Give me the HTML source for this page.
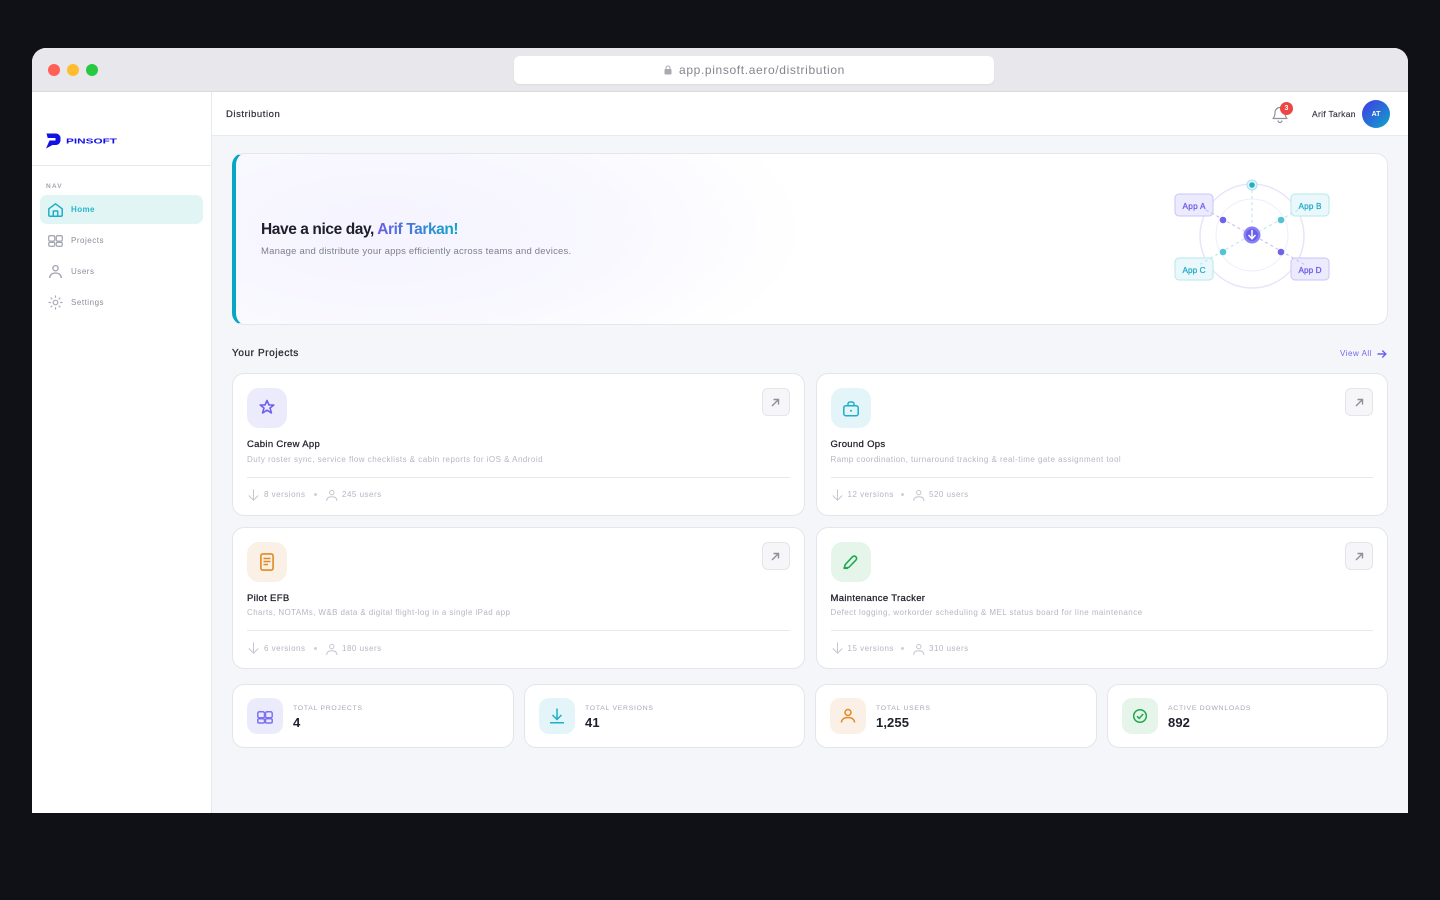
<!DOCTYPE html>
<html lang="en">
<head>
<meta charset="utf-8">
<title>Pinsoft Distribution</title>
<style>
*{box-sizing:border-box;margin:0;padding:0}
html,body{width:1440px;height:900px;overflow:hidden;background:#0f1117;font-family:"Liberation Sans",sans-serif}
.a{position:absolute}
.t{position:absolute;white-space:nowrap;line-height:1}
svg{position:absolute;overflow:visible;fill:none}
.win{position:absolute;left:32px;top:48px;width:1376px;height:765px;background:#f5f6fa;border-radius:14px 14px 0 0;overflow:hidden}
.root{position:absolute;left:0;top:0;width:1440px;height:900px}
.card{position:absolute;background:#fff;border:1px solid #e4e5ea;border-radius:12px}
.ic{position:absolute;width:40px;height:40px;border-radius:12px}
.btn{position:absolute;width:28px;height:28px;background:#f6f6f8;border:1px solid #e4e5ea;border-radius:6px}
.div{position:absolute;height:1px;background:#e8e9ed}
.ct{font-size:9.5px;color:#20212c;font-weight:400;letter-spacing:.32px;-webkit-text-stroke:.25px #20212c}
.cd{font-size:8px;color:#b5b7c3;letter-spacing:.467px}
.cf{font-size:8px;color:#b5b7c3;letter-spacing:.5px}
.dot{position:absolute;width:3px;height:3px;border-radius:50%;background:#cfd1d9}
.nav{font-size:8px;color:#8b8d9c;letter-spacing:.52px}
.sl{font-size:6.8px;color:#a6a8b5;letter-spacing:.76px}
.sv{font-size:13px;color:#1e1f2b;font-weight:700;letter-spacing:.1px}
</style>
</head>
<body>
<div class="win"></div>
<div class="root">
  <!-- Title bar -->
  <div class="a" style="left:32px;top:48px;width:1376px;height:44px;background:#e8e8ec;border-bottom:1px solid #d9d9de;border-radius:14px 14px 0 0"></div>
  <div class="a" style="left:48px;top:64px;width:12px;height:12px;border-radius:50%;background:#ff5f57"></div>
  <div class="a" style="left:67px;top:64px;width:12px;height:12px;border-radius:50%;background:#febc2e"></div>
  <div class="a" style="left:86px;top:64px;width:12px;height:12px;border-radius:50%;background:#28c840"></div>
  <div class="a" style="left:514px;top:56px;width:480px;height:28px;background:#fff;border-radius:6px;box-shadow:0 1px 2px rgba(0,0,0,.06)"></div>
  <svg style="left:664px;top:65px" width="8" height="10" viewBox="0 0 8 10"><rect x=".5" y="4" width="7" height="5.500" rx="1" fill="#a9a9b0"/><path d="M2 4.500V3a2 2 0 0 1 4 0v1.500" stroke="#a9a9b0" stroke-width="1"/></svg>
  <div class="t" style="left:679px;top:64px;font-size:12px;color:#85858e;letter-spacing:.64px">app.pinsoft.aero/distribution</div>

  <!-- Sidebar -->
  <div class="a" style="left:32px;top:92px;width:180px;height:721px;background:#fff;border-right:1px solid #e8e9ed"></div>
  <div class="a" style="left:32px;top:165px;width:179px;height:1px;background:#e8e9ed"></div>
  <svg style="left:46px;top:133px" width="15" height="16" viewBox="0 0 15 16"><path d="M.5.500H10a4.500 4.500 0 0 1 4.500 4.500v2.500a4.500 4.500 0 0 1-4.500 4.500H6.500L0 15.500 3.500 7.500H9.500V5H1.700z" fill="#1111e6"/></svg>
  <svg style="left:66px;top:136px" width="52" height="10" viewBox="0 0 52 10"><text x="0" y="7.300" font-family="Liberation Sans" font-size="7.400" font-weight="700" fill="#1111e6" textLength="51" lengthAdjust="spacingAndGlyphs">PINSOFT</text></svg>
  <div class="t" style="left:46px;top:183.500px;font-size:6.500px;color:#a2a4b1;letter-spacing:1.150px;font-weight:700">NAV</div>
  <div class="a" style="left:40px;top:195px;width:163px;height:29px;background:#e0f5f4;border-radius:7px"></div>
  <svg style="left:48px;top:203px" width="15" height="14" viewBox="0 0 15 14" stroke="#1eaec9" stroke-width="1.500" stroke-linejoin="round"><path d="M.8 5.800 7.500.8l6.700 5V12a1.300 1.300 0 0 1-1.300 1.300H2.100A1.300 1.300 0 0 1 .8 12z"/><path d="M5.300 13.300V8h4.400v5.300"/></svg>
  <div class="t nav" style="left:71px;top:205.500px;color:#25b7cd;font-weight:700;letter-spacing:.42px">Home</div>
  <svg style="left:48px;top:235px" width="15" height="12" viewBox="0 0 15 12" stroke="#a7a9b6" stroke-width="1.300"><rect x=".7" y=".7" width="6" height="5.500" rx="1.400"/><rect x="8.300" y=".7" width="6" height="5.500" rx="1.400"/><rect x=".7" y="7.300" width="6" height="4" rx="1.400"/><rect x="8.300" y="7.300" width="6" height="4" rx="1.400"/></svg>
  <div class="t nav" style="left:71px;top:236.500px">Projects</div>
  <svg style="left:49px;top:265px" width="13" height="13" viewBox="0 0 13 13" stroke="#a0a2b0" stroke-width="1.300"><circle cx="6.500" cy="3.200" r="2.600"/><path d="M.7 13c0-3 2.300-5 5.800-5s5.800 2 5.800 5"/></svg>
  <div class="t nav" style="left:71px;top:267.500px">Users</div>
  <svg style="left:48px;top:295px" width="15" height="15" viewBox="0 0 15 15" stroke="#a7a9b6" stroke-width="1.200" stroke-linecap="round"><circle cx="7.500" cy="7.500" r="2.300"/><path d="M7.500 1v1.300M7.500 12.700V14M1 7.500h1.300M12.700 7.500H14M3 3l.9.900M11.100 11.100l.9.900M3 12l.9-.900M11.100 3.900 12 3"/></svg>
  <div class="t nav" style="left:71px;top:298.500px">Settings</div>

  <!-- Header -->
  <div class="a" style="left:212px;top:92px;width:1196px;height:44px;background:#fff;border-bottom:1px solid #e9eaef"></div>
  <div class="t" style="left:226px;top:109.500px;font-size:9.500px;color:#2a2b36;letter-spacing:.57px;-webkit-text-stroke:.2px #2a2b36">Distribution</div>
  <svg style="left:1272px;top:105px" width="16" height="18" viewBox="0 0 16 18" stroke="#8f919e" stroke-width="1.200" stroke-linejoin="round"><path d="M1 13.500c1.500-1.500 2-3 2-6a5 5 0 0 1 10 0c0 3 .5 4.500 2 6z"/><path d="M6 15.500a2 2 0 0 0 4 0"/></svg>
  <div class="a" style="left:1280px;top:102px;width:13px;height:13px;border-radius:50%;background:#ef4444"></div>
  <div class="t" style="left:1280px;top:105px;width:13px;text-align:center;font-size:7px;color:#fff;font-weight:700">3</div>
  <div class="t" style="left:1312px;top:110px;font-size:8.500px;color:#30313c;letter-spacing:.3px;-webkit-text-stroke:.15px #30313c">Arif Tarkan</div>
  <div class="a" style="left:1362px;top:100px;width:28px;height:28px;border-radius:50%;background:linear-gradient(135deg,#4338e6,#0ea5c9)"></div>
  <div class="t" style="left:1362px;top:110.500px;width:28px;text-align:center;font-size:7px;color:#fff;font-weight:700">AT</div>

  <!-- Hero -->
  <div class="a" style="left:232px;top:153px;width:1156px;height:172px;border:1px solid #e6e7ec;border-left:4px solid #06a6c4;border-radius:12px;background:radial-gradient(ellipse 420px 170px at 150px 75px,#f5f4ff 0%,#f9f8ff 55%,rgba(255,255,255,0) 100%),#fff"></div>
  <div class="t" style="left:261px;top:222px;font-size:15.500px;font-weight:700;color:#1e1f2b;letter-spacing:-.41px">Have a nice day, <span style="background:linear-gradient(90deg,#6c5ce7,#0ea5c9);-webkit-background-clip:text;background-clip:text;color:transparent">Arif Tarkan!</span></div>
  <div class="t" style="left:261px;top:246.500px;font-size:9.500px;color:#7d7f8e;letter-spacing:.215px">Manage and distribute your apps efficiently across teams and devices.</div>
  <svg style="left:1150px;top:165px" width="200" height="140" viewBox="1150 165 200 140">
    <circle cx="1252" cy="236" r="52" stroke="#e7e5fb" stroke-width="1.500"/>
    <circle cx="1252" cy="235" r="36" stroke="#eeedfb" stroke-width="1"/>
    <path d="M1252 190V227" stroke="#bfe8ef" stroke-width="1.200" stroke-dasharray="3 3"/>
    <rect x="1175" y="194" width="38" height="22" rx="4" fill="#eceafd" stroke="#c9c4f7" stroke-width="1"/>
    <rect x="1291" y="194" width="38" height="22" rx="4" fill="#eaf8fb" stroke="#b5e8ee" stroke-width="1"/>
    <rect x="1175" y="258" width="38" height="22" rx="4" fill="#eaf8fb" stroke="#b5e8ee" stroke-width="1"/>
    <rect x="1291" y="258" width="38" height="22" rx="4" fill="#eceafd" stroke="#c9c4f7" stroke-width="1"/>
    <text x="1182.500" y="209" font-family="Liberation Sans" font-size="8.200" fill="#6c5ce7" stroke="#6c5ce7" stroke-width=".3" textLength="23" lengthAdjust="spacing">App A</text>
    <text x="1298.500" y="209" font-family="Liberation Sans" font-size="8.200" fill="#22aec9" stroke="#22aec9" stroke-width=".3" textLength="23" lengthAdjust="spacing">App B</text>
    <text x="1182.500" y="273" font-family="Liberation Sans" font-size="8.200" fill="#22aec9" stroke="#22aec9" stroke-width=".3" textLength="23" lengthAdjust="spacing">App C</text>
    <text x="1298.500" y="273" font-family="Liberation Sans" font-size="8.200" fill="#6c5ce7" stroke="#6c5ce7" stroke-width=".3" textLength="23" lengthAdjust="spacing">App D</text>
    <path d="M1206 210 1244 231M1260 239 1307 266" stroke="#c9c4f7" stroke-width="1.200" stroke-dasharray="3 3"/>
    <path d="M1298 210 1260 231M1244 239 1197 266" stroke="#bfe8ef" stroke-width="1.200" stroke-dasharray="3 3"/>
    <circle cx="1252" cy="185" r="5" fill="#e4f6f9" stroke="#a9e2ea" stroke-width="1"/>
    <circle cx="1252" cy="185" r="2.800" fill="#22aec9"/>
    <circle cx="1223" cy="220" r="3.300" fill="#6f62ee"/>
    <circle cx="1281" cy="220" r="3.300" fill="#55c3d6"/>
    <circle cx="1223" cy="252" r="3.300" fill="#55c3d6"/>
    <circle cx="1281" cy="252" r="3.300" fill="#6f62ee"/>
    <circle cx="1252" cy="235" r="8.500" fill="#8a80f5"/>
    <circle cx="1252" cy="235" r="6" fill="#6a5ded"/>
    <path d="M1252 230V238.500M1248.500 235 1252 238.800 1255.500 235" stroke="#fff" stroke-width="1.500"/>
  </svg>

  <!-- Section heading -->
  <div class="t" style="left:232px;top:349px;font-size:10px;color:#2a2b36;letter-spacing:.6px;-webkit-text-stroke:.3px #2a2b36">Your Projects</div>
  <div class="t" style="left:1340px;top:350px;font-size:8px;color:#7168f0;letter-spacing:.52px">View All</div>
  <svg style="left:1377px;top:348.500px" width="10" height="10" viewBox="0 0 10 10" stroke="#6a60ef" stroke-width="1.400"><path d="M.5 5H8.800M5.300 1.500 8.800 5 5.300 8.500"/></svg>

  <!-- Card 1 -->
  <div class="card" style="left:232px;top:373px;width:573px;height:143px"></div>
  <div class="ic" style="left:247px;top:388px;background:#ecebfc"></div>
  <svg style="left:259px;top:399px" width="16" height="16" viewBox="0 0 16 16" stroke="#6c60ee" stroke-width="1.600" stroke-linejoin="round"><path d="M8 1.500 10 6h4.800l-3.800 3 1.400 5L8 11.200 3.600 14 5 9 1.200 6H6z"/></svg>
  <div class="btn" style="left:762px;top:388px"></div>
  <svg style="left:771px;top:398px" width="9" height="9" viewBox="0 0 9 9" stroke="#8e8f9b" stroke-width="1.400"><path d="M1 8 7.500 1.500M2.500 1.500H7.500V6.500"/></svg>
  <div class="t ct" style="left:247px;top:439.500px">Cabin Crew App</div>
  <div class="t cd" style="left:247px;top:455.500px">Duty roster sync, service flow checklists &amp; cabin reports for iOS &amp; Android</div>
  <div class="div" style="left:247px;top:477px;width:543px"></div>
  <svg style="left:248px;top:488.500px" width="12" height="12" viewBox="0 0 12 12" stroke="#c4c6d0" stroke-width="1"><path d="M5.500.5V11M.8 6.500 5.500 11.200 10.200 6.500"/></svg>
  <div class="t cf" style="left:264px;top:490.500px">8 versions</div>
  <div class="dot" style="left:314px;top:493px"></div>
  <svg style="left:326px;top:490px" width="12" height="11" viewBox="0 0 12 11" stroke="#c4c6d0" stroke-width="1"><circle cx="5.800" cy="2.600" r="2.200"/><path d="M.7 11c0-2.800 2-4.200 5.100-4.200s5.100 1.400 5.100 4.200"/></svg>
  <div class="t cf" style="left:342px;top:490.500px">245 users</div>

  <!-- Card 2 -->
  <div class="card" style="left:816px;top:373px;width:572px;height:143px"></div>
  <div class="ic" style="left:831px;top:388px;background:#e4f5f9"></div>
  <svg style="left:843px;top:401px" width="16" height="15" viewBox="0 0 16 15" stroke="#1eaec9" stroke-width="1.500"><rect x=".8" y="4.700" width="14.400" height="10" rx="2"/><path d="M5 4.700V3a2 2 0 0 1 2-2h2a2 2 0 0 1 2 2v1.700"/><circle cx="8" cy="9.700" r="1" fill="#1eaec9" stroke="none"/></svg>
  <div class="btn" style="left:1345px;top:388px"></div>
  <svg style="left:1355px;top:398px" width="9" height="9" viewBox="0 0 9 9" stroke="#8e8f9b" stroke-width="1.400"><path d="M1 8 7.500 1.500M2.500 1.500H7.500V6.500"/></svg>
  <div class="t ct" style="left:830.500px;top:439.500px">Ground Ops</div>
  <div class="t cd" style="left:830.500px;top:455.500px">Ramp coordination, turnaround tracking &amp; real-time gate assignment tool</div>
  <div class="div" style="left:831px;top:477px;width:542px"></div>
  <svg style="left:832px;top:488.500px" width="12" height="12" viewBox="0 0 12 12" stroke="#c4c6d0" stroke-width="1"><path d="M5.500.5V11M.8 6.500 5.500 11.200 10.200 6.500"/></svg>
  <div class="t cf" style="left:847.500px;top:490.500px">12 versions</div>
  <div class="dot" style="left:901px;top:493px"></div>
  <svg style="left:913px;top:490px" width="12" height="11" viewBox="0 0 12 11" stroke="#c4c6d0" stroke-width="1"><circle cx="5.800" cy="2.600" r="2.200"/><path d="M.7 11c0-2.800 2-4.200 5.100-4.200s5.100 1.400 5.100 4.200"/></svg>
  <div class="t cf" style="left:929px;top:490.500px">520 users</div>

  <!-- Card 3 -->
  <div class="card" style="left:232px;top:527px;width:573px;height:142px"></div>
  <div class="ic" style="left:247px;top:542px;background:#fbf0e6"></div>
  <svg style="left:260px;top:553px" width="14" height="18" viewBox="0 0 14 18" stroke="#e08a24" stroke-width="1.600"><rect x=".9" y=".9" width="12.200" height="16.200" rx="2"/><path d="M3.500 5.500h7M3.500 8.500h7M3.500 11.500h4.500" stroke-width="1.500"/></svg>
  <div class="btn" style="left:762px;top:542px"></div>
  <svg style="left:771px;top:552px" width="9" height="9" viewBox="0 0 9 9" stroke="#8e8f9b" stroke-width="1.400"><path d="M1 8 7.500 1.500M2.500 1.500H7.500V6.500"/></svg>
  <div class="t ct" style="left:247px;top:593.500px">Pilot EFB</div>
  <div class="t cd" style="left:247px;top:608.500px;letter-spacing:.415px">Charts, NOTAMs, W&amp;B data &amp; digital flight-log in a single iPad app</div>
  <div class="div" style="left:247px;top:630px;width:543px"></div>
  <svg style="left:248px;top:642px" width="12" height="12" viewBox="0 0 12 12" stroke="#c4c6d0" stroke-width="1"><path d="M5.500.5V11M.8 6.500 5.500 11.200 10.200 6.500"/></svg>
  <div class="t cf" style="left:264px;top:644.500px">6 versions</div>
  <div class="dot" style="left:314px;top:647px"></div>
  <svg style="left:326px;top:643.500px" width="12" height="11" viewBox="0 0 12 11" stroke="#c4c6d0" stroke-width="1"><circle cx="5.800" cy="2.600" r="2.200"/><path d="M.7 11c0-2.800 2-4.200 5.100-4.200s5.100 1.400 5.100 4.200"/></svg>
  <div class="t cf" style="left:342px;top:644.500px">180 users</div>

  <!-- Card 4 -->
  <div class="card" style="left:816px;top:527px;width:572px;height:142px"></div>
  <div class="ic" style="left:831px;top:542px;background:#e5f5ea"></div>
  <svg style="left:843px;top:555px" width="16" height="14" viewBox="0 0 16 14" stroke="#1fa84f" stroke-width="1.600" stroke-linejoin="round"><path d="M1.200 13 2.300 9.500 9.500 1.800a2.300 2.300 0 0 1 3.400 0 2.300 2.300 0 0 1 0 3.300L5.700 12.500z"/><path d="M.5 13.300H5"/></svg>
  <div class="btn" style="left:1345px;top:542px"></div>
  <svg style="left:1355px;top:552px" width="9" height="9" viewBox="0 0 9 9" stroke="#8e8f9b" stroke-width="1.400"><path d="M1 8 7.500 1.500M2.500 1.500H7.500V6.500"/></svg>
  <div class="t ct" style="left:830.500px;top:593.500px">Maintenance Tracker</div>
  <div class="t cd" style="left:830.500px;top:608.500px;letter-spacing:.447px">Defect logging, workorder scheduling &amp; MEL status board for line maintenance</div>
  <div class="div" style="left:831px;top:630px;width:542px"></div>
  <svg style="left:832px;top:642px" width="12" height="12" viewBox="0 0 12 12" stroke="#c4c6d0" stroke-width="1"><path d="M5.500.5V11M.8 6.500 5.500 11.200 10.200 6.500"/></svg>
  <div class="t cf" style="left:847.500px;top:644.500px">15 versions</div>
  <div class="dot" style="left:901px;top:647px"></div>
  <svg style="left:913px;top:643.500px" width="12" height="11" viewBox="0 0 12 11" stroke="#c4c6d0" stroke-width="1"><circle cx="5.800" cy="2.600" r="2.200"/><path d="M.7 11c0-2.800 2-4.200 5.100-4.200s5.100 1.400 5.100 4.200"/></svg>
  <div class="t cf" style="left:929px;top:644.500px">310 users</div>

  <!-- Stats -->
  <div class="card" style="left:232px;top:684px;width:282px;height:64px"></div>
  <div class="ic" style="left:247px;top:698px;width:36px;height:36px;border-radius:10px;background:#ecebfc"></div>
  <svg style="left:257px;top:711px" width="16" height="13" viewBox="0 0 16 13" stroke="#7d70f5" stroke-width="1.500"><rect x=".8" y=".8" width="6.700" height="6" rx="1.500"/><rect x="8.500" y=".8" width="6.700" height="6" rx="1.500"/><rect x=".8" y="7.800" width="6.700" height="4.200" rx="1.300"/><rect x="8.500" y="7.800" width="6.700" height="4.200" rx="1.300"/></svg>
  <div class="t sl" style="left:293px;top:706px">TOTAL PROJECTS</div>
  <div class="t sv" style="left:293px;top:716px">4</div>

  <div class="card" style="left:524px;top:684px;width:281px;height:64px"></div>
  <div class="ic" style="left:539px;top:698px;width:36px;height:36px;border-radius:10px;background:#e4f5f9"></div>
  <svg style="left:549px;top:708px" width="16" height="16" viewBox="0 0 16 16" stroke="#1eaec9" stroke-width="1.500"><path d="M8 .5V11M3.500 7 8 11.500 12.500 7M1 14.800h14"/></svg>
  <div class="t sl" style="left:585px;top:706px">TOTAL VERSIONS</div>
  <div class="t sv" style="left:585px;top:716px">41</div>

  <div class="card" style="left:815px;top:684px;width:282px;height:64px"></div>
  <div class="ic" style="left:830px;top:698px;width:36px;height:36px;border-radius:10px;background:#fbf0e6"></div>
  <svg style="left:841px;top:709px" width="14" height="14" viewBox="0 0 14 14" stroke="#e08a24" stroke-width="1.500"><circle cx="7" cy="3.500" r="3"/><path d="M.5 13.500c0-3.200 2.800-5 6.500-5s6.500 1.800 6.500 5"/></svg>
  <div class="t sl" style="left:876px;top:706px">TOTAL USERS</div>
  <div class="t sv" style="left:876px;top:716px">1,255</div>

  <div class="card" style="left:1107px;top:684px;width:281px;height:64px"></div>
  <div class="ic" style="left:1122px;top:698px;width:36px;height:36px;border-radius:10px;background:#e5f5ea"></div>
  <svg style="left:1133px;top:709px" width="14" height="14" viewBox="0 0 14 14" stroke="#1fa84f" stroke-width="1.500"><circle cx="7" cy="7" r="6.300"/><path d="M4 7.200 6.200 9.400 10.200 5"/></svg>
  <div class="t sl" style="left:1168px;top:706px">ACTIVE DOWNLOADS</div>
  <div class="t sv" style="left:1168px;top:716px">892</div>
</div>
</body>
</html>
